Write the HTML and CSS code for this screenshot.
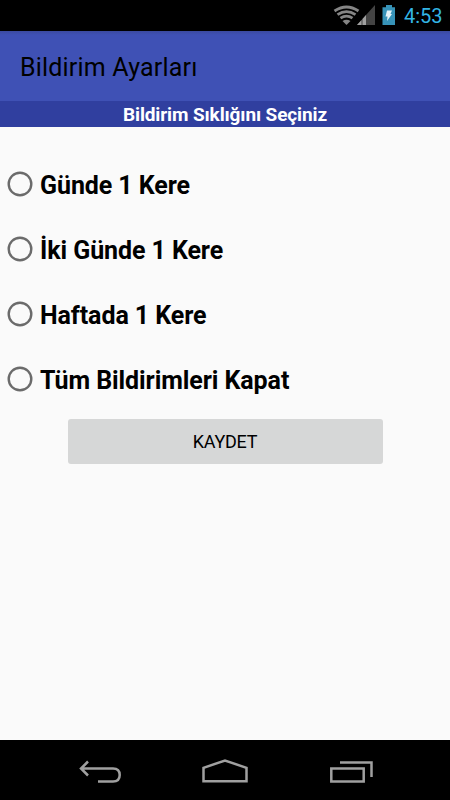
FILE: index.html
```html
<!DOCTYPE html>
<html lang="tr">
<head>
<meta charset="utf-8">
<title>Bildirim Ayarları</title>
<link rel="stylesheet" href="styles.css">
</head>
<body>
<div class="status">
  <svg width="70" height="31" viewBox="330 0 70 31">
    <g fill="none" stroke="#858585" stroke-width="2.800"><path d="M334.500 11Q346.500 3 358.500 11"/><path d="M337.500 14.700Q346.500 8.500 355.500 14.700"/><path d="M340.500 18.200Q346.500 14 352.500 18.200"/></g>
    <path d="M342.500 21Q346.500 18.500 350.500 21L346.500 25Z" fill="#858585"/>
    <path d="M375 5V25H357Z" fill="#444"/><path d="M366 15V25H362.500V19ZM361.500 20V25H357Z" fill="#a0a0a0"/>
    <path d="M386 5H392V7.200H395V25H382.500V7.200H386Z" fill="#3793b8"/><path d="M387 10.500H392L390.500 14H392L387 21L387.500 16.500H385.500Z" fill="#e4f3f8"/>
  </svg>
  <span class="clock">4:53</span>
</div>
<header class="toolbar"><h1>Bildirim Ayarları</h1></header>
<h2 class="banner">Bildirim Sıklığını Seçiniz</h2>
<main class="content">
  <div class="option"><svg class="radio" viewBox="0 0 26 26"><circle cx="13" cy="13" r="11.300"/></svg><span>Günde 1 Kere</span></div>
  <div class="option"><svg class="radio" viewBox="0 0 26 26"><circle cx="13" cy="13" r="11.300"/></svg><span>İki Günde 1 Kere</span></div>
  <div class="option"><svg class="radio" viewBox="0 0 26 26"><circle cx="13" cy="13" r="11.300"/></svg><span>Haftada 1 Kere</span></div>
  <div class="option"><svg class="radio" viewBox="0 0 26 26"><circle cx="13" cy="13" r="11.300"/></svg><span>Tüm Bildirimleri Kapat</span></div>
  <button class="save">KAYDET</button>
</main>
<nav class="nav">
  <svg width="450" height="60" viewBox="0 740 450 60" fill="none" stroke="#a0a0a0" stroke-width="2.500"><path d="M88 761.500L81 768.500L88 775.500M81 768.500H113Q119.700 768.500 119.700 775Q119.700 781.500 113 781.500H98"/><path d="M203.500 781.300V767.800L225 760.500L246.500 767.800V781.300Z"/><path d="M331.300 768.500H363.700V781.500H331.300ZM340 762.500H371.500V777"/></svg>
</nav>
</body>
</html>
```
FILE: styles.css
```css
* { box-sizing: border-box; }
body { margin: 0; width: 450px; height: 800px; display: flex; flex-direction: column; background: #fafafa; font-family: Roboto, sans-serif; color: #000; overflow: hidden; }
.status { height: 31px; background: #000; display: flex; align-items: center; justify-content: flex-end; padding-right: 8px; }
.clock { color: #33b5e5; font-size: 20px; width: 38px; margin-left: 4px; white-space: nowrap; }
.status svg { flex: none; }
.toolbar { height: 70px; background: linear-gradient(#3b4a9f, #3f51b5 4px); padding: 2px 0 0 20px; display: flex; align-items: center; }
.toolbar h1 { margin: 0; font-size: 25px; font-weight: 400; letter-spacing: 0.190px; }
.banner { margin: 0; height: 25.500px; background: #303f9f; color: #fff; text-align: center; font-size: 19px; line-height: 27px; font-weight: 700; letter-spacing: -0.120px; }
.content { flex: 1; padding-top: 24.500px; display: flex; flex-direction: column; }
.option { height: 65px; padding-left: 7px; display: flex; align-items: center; font-size: 25px; font-weight: 700; letter-spacing: -0.080px; }
.option span { padding-top: 3px; }
.radio { width: 26px; height: 26px; margin-right: 7px; fill: none; stroke: #6b6b6b; stroke-width: 2.400px; }
.save { margin: 8px auto 0 67.500px; width: 315px; height: 45px; border: 0; border-radius: 3px; background: #d6d7d7; font: 18px Roboto, sans-serif; letter-spacing: -0.250px; color: #000; }
.nav { height: 60px; background: #000; }
.nav svg { display: block; }
```
